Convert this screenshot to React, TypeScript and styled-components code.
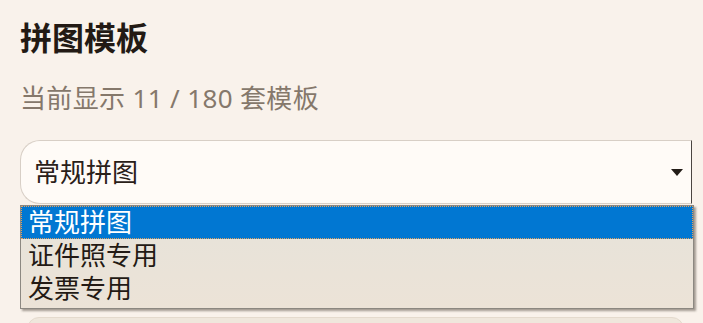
import React from 'react';
import styled, { createGlobalStyle } from 'styled-components';

const GlobalStyle = createGlobalStyle`
  html, body {
    margin: 0;
    padding: 0;
    background: #f9f2eb;
  }
  body {
    font-family: 'Noto Sans', 'Noto Sans CJK SC', sans-serif;
    overflow: hidden;
  }
`;

const options = ['常规拼图', '证件照专用', '发票专用'];

export default function App() {
  return (
    <>
      <GlobalStyle />
      <Page>
        <Title>拼图模板</Title>
        <Subtitle>当前显示 11 / 180 套模板</Subtitle>
        <SelectWrap>
          <SelectBox>
            <SelectValue>常规拼图</SelectValue>
            <Arrow />
          </SelectBox>
          <OptionList>
            {options.map((o, i) => (
              <OptionItem key={o} $active={i === 0}>
                {o}
              </OptionItem>
            ))}
          </OptionList>
        </SelectWrap>
        <NextCard />
      </Page>
    </>
  );
}

const Page = styled.div`
  padding: 18px 11px 0 20px;
  display: flex;
  flex-direction: column;
`;

const Title = styled.h1`
  margin: 0;
  font-size: 32px;
  line-height: 40px;
  font-weight: 700;
  color: #231a14;
`;

const Subtitle = styled.p`
  margin: 25px 0 0;
  font-size: 26px;
  line-height: 30px;
  letter-spacing: 0.35px;
  color: #85786b;
`;

const SelectWrap = styled.div`
  position: relative;
  margin-top: 27px;
  width: 672px;
`;

const SelectBox = styled.div`
  box-sizing: border-box;
  height: 64px;
  display: flex;
  align-items: center;
  justify-content: space-between;
  padding: 0 8px 0 13px;
  background: #fffbf7;
  border: 1px solid #d8cfc6;
  border-right: 1px solid #4a4440;
  border-radius: 20px 0 0 20px;
`;

const SelectValue = styled.span`
  font-size: 26px;
  line-height: 30px;
  color: #2a2019;
`;

const Arrow = styled.span`
  width: 0;
  height: 0;
  border-left: 6px solid transparent;
  border-right: 6px solid transparent;
  border-top: 7px solid #231c17;
`;

const OptionList = styled.div`
  position: absolute;
  top: 65px;
  left: 0;
  box-sizing: border-box;
  width: 674px;
  padding-bottom: 3px;
  background: linear-gradient(#e6e3da, #ece3d7);
  border: 1px solid #8c8881;
  box-shadow: 2px 2px 2px rgba(60, 50, 40, 0.45);
  z-index: 2;
`;

const OptionItem = styled.div<{ $active?: boolean }>`
  box-sizing: border-box;
  height: 33px;
  padding-left: 7px;
  font-size: 26px;
  line-height: 33px;
  color: ${(p) => (p.$active ? '#ffffff' : '#231a14')};
  background: ${(p) => (p.$active ? '#0177d2' : 'transparent')};
  outline: ${(p) => (p.$active ? '1px dotted #e0a060' : 'none')};
  outline-offset: -1px;
`;

const NextCard = styled.div`
  margin: 113px 8px 0 7px;
  height: 40px;
  background: #efe7dc;
  border: 1px solid #e4dacd;
  border-radius: 12px;
`;
